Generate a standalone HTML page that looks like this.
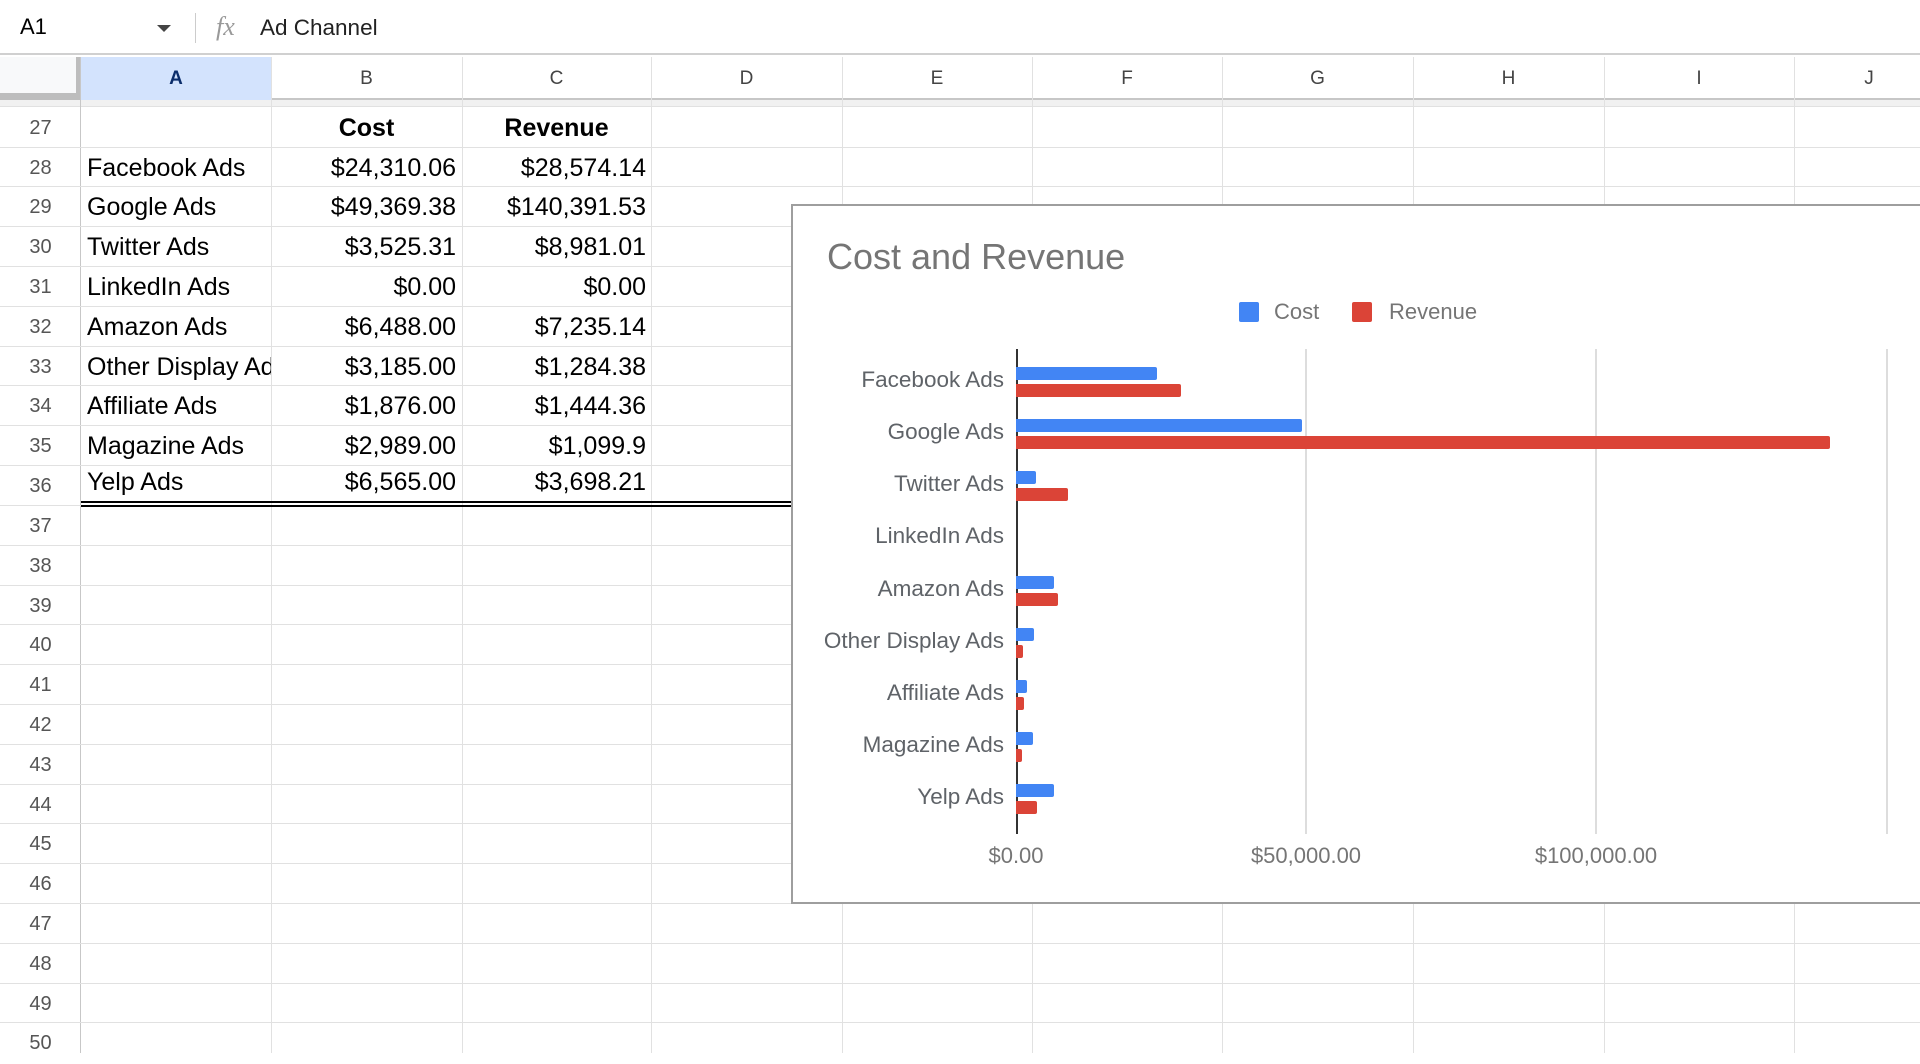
<!DOCTYPE html>
<html><head><meta charset="utf-8"><style>
*{margin:0;padding:0;box-sizing:border-box}
body{width:1920px;height:1053px;overflow:hidden;background:#fff;font-family:"Liberation Sans",Arial,sans-serif;position:relative}
.a{position:absolute}
.vl{position:absolute;top:57px;bottom:0;width:1px;background:#e1e1e1}
.hl{position:absolute;left:0;right:0;height:1px;background:#e1e1e1}
.ch{position:absolute;top:57px;height:43px;line-height:43px;text-align:center;font-size:19px;color:#444}
.rn{position:absolute;left:0;width:81px;text-align:center;font-size:20px;color:#555;height:40px;line-height:42px}
.c{position:absolute;height:40px;line-height:42px;font-size:25px;color:#000;white-space:nowrap;overflow:hidden}
.r{text-align:right}
.cl{position:absolute;right:916px;font-size:22.5px;color:#5f6368;text-align:right}
.bb{position:absolute;left:1016px;height:13px;background:#4285f4;border-radius:0 2px 2px 0}
.br{position:absolute;left:1016px;height:13px;background:#db4437;border-radius:0 2px 2px 0}
</style></head><body>
<div class="a" style="left:0;top:0;width:1920px;height:55px;border-bottom:2px solid #d0d0d0"></div>
<div class="a" style="left:20px;top:14px;font-size:22px;color:#000">A1</div>
<div class="a" style="left:157px;top:25px;width:0;height:0;border-left:7px solid transparent;border-right:7px solid transparent;border-top:7px solid #444"></div>
<div class="a" style="left:195px;top:13px;width:1px;height:30px;background:#ccc"></div>
<div class="a" style="left:216px;top:12px;font-family:'Liberation Serif',serif;font-style:italic;font-size:26px;color:#999">fx</div>
<div class="a" style="left:260px;top:15px;font-size:22.5px;color:#222">Ad Channel</div>
<div class="a" style="left:0;top:57px;width:1920px;height:43px;background:#fff;border-bottom:2px solid #c7c7c7"></div>
<div class="a" style="left:81px;top:57px;width:190px;height:43px;background:#d3e3fd"></div>
<div class="a" style="left:0;top:57px;width:76px;height:36px;background:#f8f9fa"></div>
<div class="a" style="left:76px;top:57px;width:5px;height:43px;background:#bdbdbd"></div>
<div class="a" style="left:0;top:93px;width:81px;height:7px;background:#bdbdbd"></div>
<div class="a" style="left:0;top:100px;width:1920px;height:7px;background:#f1f1f1;border-bottom:1px solid #e1e1e1"></div>
<div class="ch" style="left:81px;width:190px;font-weight:bold;color:#0b2d6b">A</div>
<div class="ch" style="left:271px;width:191px">B</div>
<div class="ch" style="left:462px;width:189px">C</div>
<div class="ch" style="left:651px;width:191px">D</div>
<div class="ch" style="left:842px;width:190px">E</div>
<div class="ch" style="left:1032px;width:190px">F</div>
<div class="ch" style="left:1222px;width:191px">G</div>
<div class="ch" style="left:1413px;width:191px">H</div>
<div class="ch" style="left:1604px;width:190px">I</div>
<div class="ch" style="left:1794px;width:190px;padding-right:40px">J</div>
<div class="vl" style="left:80px;background:#c7c7c7"></div>
<div class="vl" style="left:271px"></div><div class="vl" style="left:462px"></div><div class="vl" style="left:651px"></div>
<div class="vl" style="left:842px"></div><div class="vl" style="left:1032px"></div><div class="vl" style="left:1222px"></div>
<div class="vl" style="left:1413px"></div><div class="vl" style="left:1604px"></div><div class="vl" style="left:1794px"></div>
<div class="hl" style="top:147px"></div><div class="hl" style="top:186px"></div><div class="hl" style="top:226px"></div>
<div class="hl" style="top:266px"></div><div class="hl" style="top:306px"></div><div class="hl" style="top:346px"></div>
<div class="hl" style="top:385px"></div><div class="hl" style="top:425px"></div><div class="hl" style="top:465px"></div>
<div class="hl" style="top:505px"></div><div class="hl" style="top:545px"></div><div class="hl" style="top:585px"></div>
<div class="hl" style="top:624px"></div><div class="hl" style="top:664px"></div><div class="hl" style="top:704px"></div>
<div class="hl" style="top:744px"></div><div class="hl" style="top:784px"></div><div class="hl" style="top:823px"></div>
<div class="hl" style="top:863px"></div><div class="hl" style="top:903px"></div><div class="hl" style="top:943px"></div>
<div class="hl" style="top:983px"></div><div class="hl" style="top:1022px"></div>
<div class="a" style="left:81px;top:501px;width:710px;height:2px;background:#000"></div>
<div class="a" style="left:81px;top:505px;width:710px;height:2px;background:#000"></div>
<div class="rn" style="top:107px">27</div><div class="rn" style="top:147px">28</div><div class="rn" style="top:186px">29</div>
<div class="rn" style="top:226px">30</div><div class="rn" style="top:266px">31</div><div class="rn" style="top:306px">32</div>
<div class="rn" style="top:346px">33</div><div class="rn" style="top:385px">34</div><div class="rn" style="top:425px">35</div>
<div class="rn" style="top:465px">36</div><div class="rn" style="top:505px">37</div><div class="rn" style="top:545px">38</div>
<div class="rn" style="top:585px">39</div><div class="rn" style="top:624px">40</div><div class="rn" style="top:664px">41</div>
<div class="rn" style="top:704px">42</div><div class="rn" style="top:744px">43</div><div class="rn" style="top:784px">44</div>
<div class="rn" style="top:823px">45</div><div class="rn" style="top:863px">46</div><div class="rn" style="top:903px">47</div>
<div class="rn" style="top:943px">48</div><div class="rn" style="top:983px">49</div><div class="rn" style="top:1022px">50</div>
<div class="c" style="left:271px;top:107px;width:191px;text-align:center;font-weight:bold">Cost</div>
<div class="c" style="left:462px;top:107px;width:189px;text-align:center;font-weight:bold">Revenue</div>

<div class="c" style="left:87px;top:147px;width:184px">Facebook Ads</div>
<div class="c r" style="left:271px;top:147px;width:185px">$24,310.06</div>
<div class="c r" style="left:462px;top:147px;width:184px">$28,574.14</div>

<div class="c" style="left:87px;top:186px;width:184px">Google Ads</div>
<div class="c r" style="left:271px;top:186px;width:185px">$49,369.38</div>
<div class="c r" style="left:462px;top:186px;width:184px">$140,391.53</div>

<div class="c" style="left:87px;top:226px;width:184px">Twitter Ads</div>
<div class="c r" style="left:271px;top:226px;width:185px">$3,525.31</div>
<div class="c r" style="left:462px;top:226px;width:184px">$8,981.01</div>

<div class="c" style="left:87px;top:266px;width:184px">LinkedIn Ads</div>
<div class="c r" style="left:271px;top:266px;width:185px">$0.00</div>
<div class="c r" style="left:462px;top:266px;width:184px">$0.00</div>

<div class="c" style="left:87px;top:306px;width:184px">Amazon Ads</div>
<div class="c r" style="left:271px;top:306px;width:185px">$6,488.00</div>
<div class="c r" style="left:462px;top:306px;width:184px">$7,235.14</div>

<div class="c" style="left:87px;top:346px;width:184px">Other Display Ads</div>
<div class="c r" style="left:271px;top:346px;width:185px">$3,185.00</div>
<div class="c r" style="left:462px;top:346px;width:184px">$1,284.38</div>

<div class="c" style="left:87px;top:385px;width:184px">Affiliate Ads</div>
<div class="c r" style="left:271px;top:385px;width:185px">$1,876.00</div>
<div class="c r" style="left:462px;top:385px;width:184px">$1,444.36</div>

<div class="c" style="left:87px;top:425px;width:184px">Magazine Ads</div>
<div class="c r" style="left:271px;top:425px;width:185px">$2,989.00</div>
<div class="c r" style="left:462px;top:425px;width:184px">$1,099.9</div>

<div class="c" style="left:87px;top:461px;width:184px">Yelp Ads</div>
<div class="c r" style="left:271px;top:461px;width:185px">$6,565.00</div>
<div class="c r" style="left:462px;top:461px;width:184px">$3,698.21</div>

<div class="a" style="left:791px;top:204px;width:1140px;height:700px;background:#fff;border:2px solid #9e9e9e"></div>
<div class="a" style="left:827px;top:236px;font-size:36px;color:#757575">Cost and Revenue</div>
<div class="a" style="left:1239px;top:302px;width:20px;height:20px;background:#4285f4;border-radius:2px"></div>
<div class="a" style="left:1274px;top:299px;font-size:22px;color:#757575">Cost</div>
<div class="a" style="left:1352px;top:302px;width:20px;height:20px;background:#db4437;border-radius:2px"></div>
<div class="a" style="left:1389px;top:299px;font-size:22px;color:#757575">Revenue</div>
<div class="a" style="left:1305px;top:349px;width:2px;height:485px;background:#ddd"></div>
<div class="a" style="left:1595px;top:349px;width:2px;height:485px;background:#ddd"></div>
<div class="a" style="left:1886px;top:349px;width:2px;height:485px;background:#ddd"></div>
<div class="a" style="left:1016px;top:349px;width:2px;height:485px;background:#333"></div>
<div class="cl" style="top:367px">Facebook Ads</div>
<div class="cl" style="top:419px">Google Ads</div>
<div class="cl" style="top:471px">Twitter Ads</div>
<div class="cl" style="top:523px">LinkedIn Ads</div>
<div class="cl" style="top:576px">Amazon Ads</div>
<div class="cl" style="top:628px">Other Display Ads</div>
<div class="cl" style="top:680px">Affiliate Ads</div>
<div class="cl" style="top:732px">Magazine Ads</div>
<div class="cl" style="top:784px">Yelp Ads</div>
<div class="bb" style="top:367px;width:141px"></div><div class="br" style="top:384px;width:165px"></div>
<div class="bb" style="top:419px;width:286px"></div><div class="br" style="top:436px;width:814px"></div>
<div class="bb" style="top:471px;width:20px"></div><div class="br" style="top:488px;width:52px"></div>
<div class="bb" style="top:576px;width:38px"></div><div class="br" style="top:593px;width:42px"></div>
<div class="bb" style="top:628px;width:18px"></div><div class="br" style="top:645px;width:7px"></div>
<div class="bb" style="top:680px;width:11px"></div><div class="br" style="top:697px;width:8px"></div>
<div class="bb" style="top:732px;width:17px"></div><div class="br" style="top:749px;width:6px"></div>
<div class="bb" style="top:784px;width:38px"></div><div class="br" style="top:801px;width:21px"></div>
<div class="a" style="left:966px;top:843px;width:100px;text-align:center;font-size:22px;color:#757575">$0.00</div>
<div class="a" style="left:1221px;top:843px;width:170px;text-align:center;font-size:22px;color:#757575">$50,000.00</div>
<div class="a" style="left:1506px;top:843px;width:180px;text-align:center;font-size:22px;color:#757575">$100,000.00</div>
</body></html>
